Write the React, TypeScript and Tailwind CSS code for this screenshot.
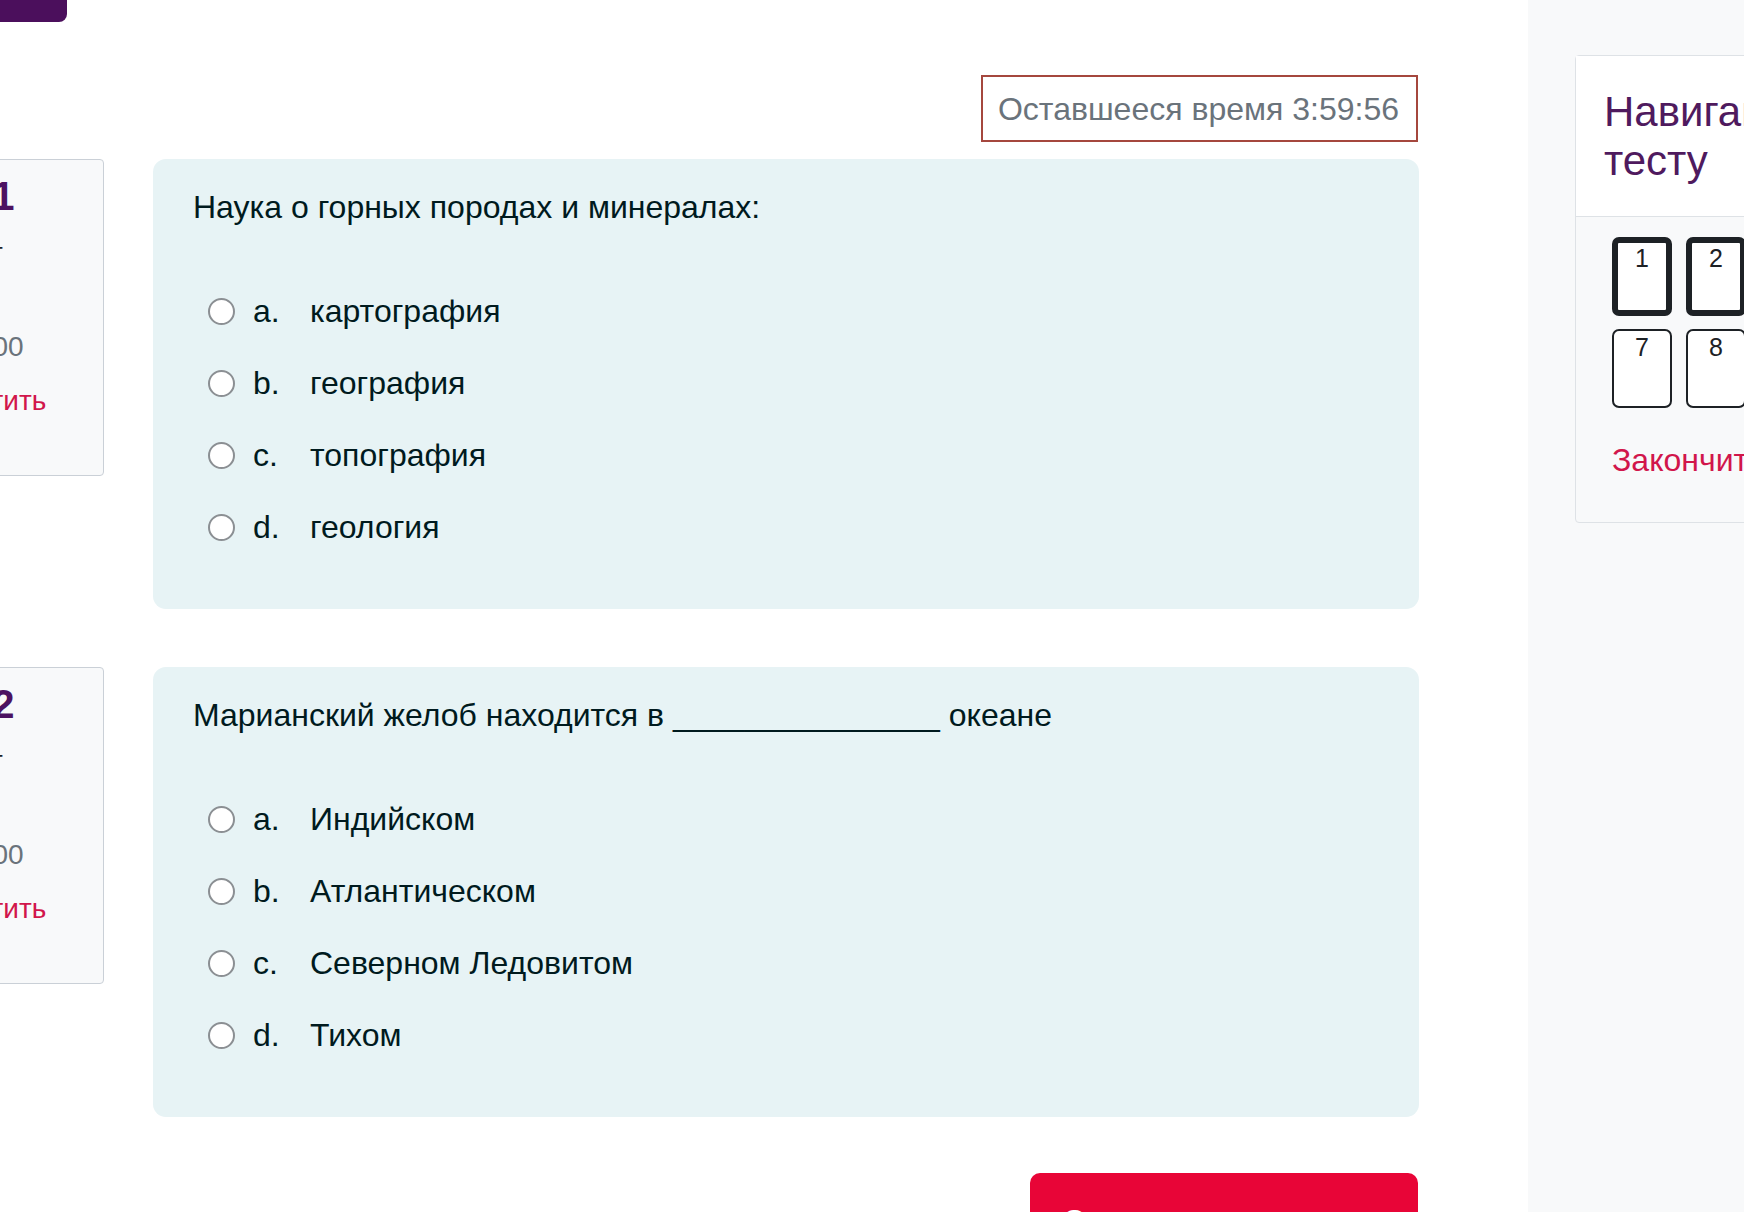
import React from 'react';

type Question = {
  no: number;
  text: string;
  answers: string[];
};

const questions: Question[] = [
  {
    no: 1,
    text: 'Наука о горных породах и минералах:',
    answers: ['картография', 'география', 'топография', 'геология'],
  },
  {
    no: 2,
    text: 'Марианский желоб находится в _______________ океане',
    answers: ['Индийском', 'Атлантическом', 'Северном Ледовитом', 'Тихом'],
  },
];

const letters = ['a.', 'b.', 'c.', 'd.'];

const QuestionInfo = ({ no }: { no: number }) => (
  <div className="w-[300px] -ml-[196px] shrink-0 h-[317px] rounded-[4px] border border-[#cad0d7] bg-[#f8f9fa] pl-[16px] pt-[12px] whitespace-nowrap">
    <h3 className="ml-[12px] text-[40px] leading-[48px] font-bold text-[#4c1261]">Вопрос {no}</h3>
    <div className="ml-[67px] mt-[12px] text-[28px] leading-[42px] text-[#1d2125]">
      Пока нет
      <br />
      ответа
    </div>
    <div className="ml-[66px] mt-[10px] text-[28px] leading-[42px] text-[#6a737b]">Балл: 1,00</div>
    <div className="ml-[101px] mt-[12px] text-[28px] leading-[42px] text-[#d1164b]">Отметить</div>
  </div>
);

const AnswerRow = ({ letter, label }: { letter: string; label: string }) => (
  <label className="flex items-center h-[48px] mt-[24px] first:mt-0">
    <span className="ml-[15px] w-[27px] h-[27px] rounded-full border-[2.5px] border-[#8b8f93] bg-white shrink-0" />
    <span className="ml-[18px] w-[57px] shrink-0">{letter}</span>
    <span>{label}</span>
  </label>
);

const QuestionBlock = ({ q }: { q: Question }) => (
  <div className="flex items-start">
    <QuestionInfo no={q.no} />
    <div className="ml-[49px] w-[1266px] rounded-[13px] bg-[#e7f3f5] pl-[40px] pt-[24px] pb-[58px] text-[32px] leading-[48px] text-[#001a1e]">
      <p>{q.text}</p>
      <div className="mt-[56px] flex flex-col">
        {q.answers.map((a, i) => (
          <AnswerRow key={a} letter={letters[i]} label={a} />
        ))}
      </div>
    </div>
  </div>
);

const NavButton = ({ n, current }: { n: number; current: boolean }) => (
  <div
    className={
      current
        ? 'w-[60px] h-[79px] shrink-0 rounded-[7px] border-[6px] border-[#1d2125] bg-white pt-[3px] text-center text-[25px] leading-[25px] text-[#1d2125]'
        : 'w-[60px] h-[79px] shrink-0 rounded-[7px] border-2 border-[#1d2125] bg-white pt-[4px] text-center text-[25px] leading-[25px] text-[#1d2125]'
    }
  >
    {n}
  </div>
);

export default function App() {
  const pages = Array.from({ length: 12 }, (_, i) => i + 1);

  return (
    <div className="flex h-[1212px] w-[1744px] overflow-hidden bg-white font-['Liberation_Sans',Arial,sans-serif]">
      {/* main column */}
      <div className="w-[1528px] shrink-0">
        <div className="h-[22px] w-[67px] rounded-br-[8px] bg-[#4b0f5c]" />

        <div className="mt-[53px] flex justify-end pr-[110px]">
          <div className="flex h-[67px] items-center border-2 border-[#a5473e] pl-[15px] pr-[17px] text-[32px] leading-none text-[#6a737b]">
            Оставшееся время 3:59:56
          </div>
        </div>

        <div className="mt-[17px] flex flex-col gap-[58px]">
          {questions.map((q) => (
            <QuestionBlock key={q.no} q={q} />
          ))}
        </div>

        <div className="mt-[56px] flex justify-end pr-[110px]">
          <button className="h-[80px] w-[388px] rounded-[10px] bg-[#e80537] pl-[32px] pt-[16px] text-left text-[32px] leading-[48px] text-white self-start">
            Следующая страница
          </button>
        </div>
      </div>

      {/* quiz navigation drawer */}
      <div className="flex-1 bg-[#f8f9fa] pl-[47px] pt-[55px]">
        <div className="w-[420px] rounded-[4px] border border-[#dee2e6] bg-[#f8f9fa]">
          <div className="border-b border-[#dee2e6] bg-white pl-[28px] pt-[31px] pb-[31px] text-[42px] leading-[49px] text-[#4f1a5e] whitespace-nowrap">
            Навигация по
            <br />
            тесту
          </div>
          <div className="pl-[36px] pt-[20px] pb-[38px]">
            <div className="grid w-[432px] grid-cols-6 gap-x-[12px] gap-y-[13px]">
              {pages.map((n) => (
                <NavButton key={n} n={n} current={n <= 2} />
              ))}
            </div>
            <div className="mt-[28px] whitespace-nowrap text-[32px] leading-[48px] text-[#d1164b]">
              Закончить попытку...
            </div>
          </div>
        </div>
      </div>
    </div>
  );
}
